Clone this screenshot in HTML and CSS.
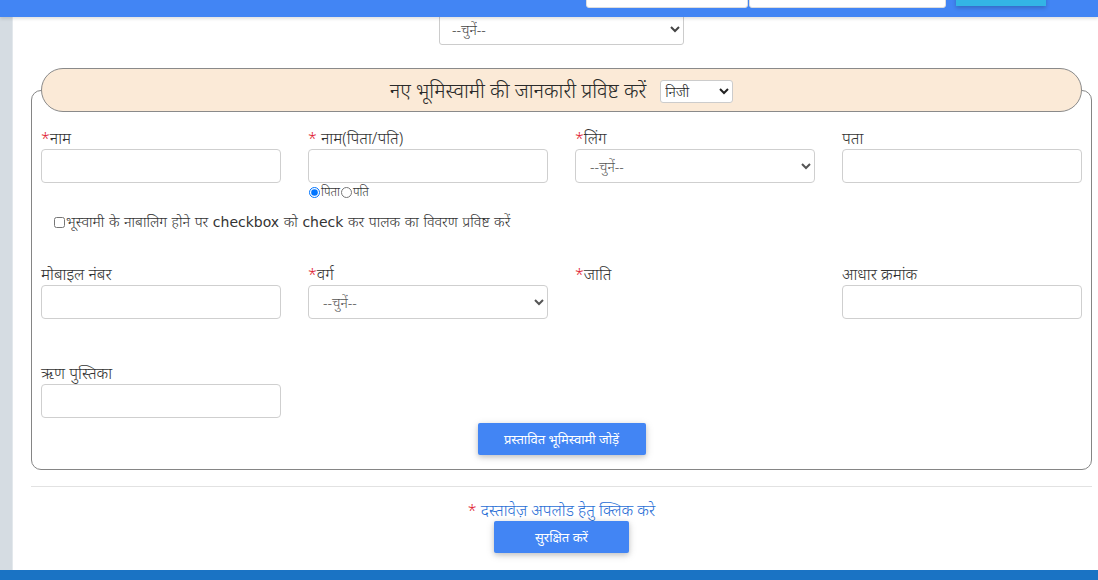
FILE: index.html
```html
<!DOCTYPE html>
<html lang="hi">
<head>
<meta charset="utf-8">
<title>नए भूमिस्वामी</title>
<link rel="stylesheet" href="styles.css">
</head>
<body>
<header class="topbar">
  <div class="search">
    <input class="search-input search-a" type="text">
    <input class="search-input search-b" type="text">
    <button class="search-btn" type="button">खोजें</button>
  </div>
</header>
<div class="page">
  <aside class="side"></aside>
  <main class="content">
    <div class="top-select-row">
      <select class="top-select"><option>--चुनें--</option></select>
    </div>
    <fieldset class="owner-box">
      <legend class="owner-legend">
        <span class="legend-title">नए भूमिस्वामी की जानकारी प्रविष्ट करें</span>
        <select class="legend-select"><option>निजी</option><option>शासकीय</option></select>
      </legend>

      <div class="grid row-1">
        <div class="field">
          <label class="lbl"><span class="req">*</span>नाम</label>
          <input class="ctrl" type="text">
        </div>
        <div class="field">
          <label class="lbl"><span class="req">*</span> नाम(पिता/पति)</label>
          <input class="ctrl" type="text">
          <div class="radios">
            <label class="radio"><input type="radio" name="rel" checked>पिता</label><label class="radio"><input type="radio" name="rel">पति</label>
          </div>
        </div>
        <div class="field">
          <label class="lbl"><span class="req">*</span>लिंग</label>
          <select class="ctrl sel"><option>--चुनें--</option></select>
        </div>
        <div class="field">
          <label class="lbl">पता</label>
          <input class="ctrl" type="text">
        </div>
      </div>

      <label class="minor"><input type="checkbox"><span>भूस्वामी के नाबालिग होने पर <span class="latin">checkbox</span> को <span class="latin">check</span> कर पालक का विवरण प्रविष्ट करें</span></label>

      <div class="grid row-2">
        <div class="field">
          <label class="lbl">मोबाइल नंबर</label>
          <input class="ctrl" type="text">
        </div>
        <div class="field">
          <label class="lbl"><span class="req">*</span>वर्ग</label>
          <select class="ctrl sel"><option>--चुनें--</option></select>
        </div>
        <div class="field">
          <label class="lbl"><span class="req">*</span>जाति</label>
        </div>
        <div class="field">
          <label class="lbl">आधार क्रमांक</label>
          <input class="ctrl" type="text">
        </div>
      </div>

      <div class="grid row-3">
        <div class="field">
          <label class="lbl">ऋण पुस्तिका</label>
          <input class="ctrl" type="text">
        </div>
      </div>

      <div class="center">
        <button class="btn btn-add" type="button">प्रस्तावित भूमिस्वामी जोड़ें</button>
      </div>
    </fieldset>

    <hr class="sep">

    <div class="center upload">
      <a class="upload-link" href="#"><span class="req">*</span> दस्तावेज़ अपलोड हेतु क्लिक करे</a>
    </div>
    <div class="center">
      <button class="btn btn-save" type="button">सुरक्षित करें</button>
    </div>
  </main>
</div>
<footer class="footer"></footer>
</body>
</html>
```
FILE: styles.css
```css
* { box-sizing: border-box; }
html, body { margin: 0; padding: 0; }
body {
  font-family: "Noto Sans", Roboto, "DejaVu Sans", sans-serif;
  font-weight: 300;
  color: #333;
  background: #fff;
  width: 1098px;
  height: 580px;
  overflow: hidden;
  display: flex;
  flex-direction: column;
}

.topbar {
  height: 17px;
  flex: none;
  background: #4285f4;
  position: relative;
  z-index: 2;
  overflow: hidden;
  box-shadow: 0 2px 3px rgba(0,0,0,0.12);
}
.search {
  display: flex;
  justify-content: flex-end;
  align-items: flex-start;
  padding-right: 52px;
  margin-top: -24px;
}
.search-input {
  height: 32px;
  border: 1px solid #ddd;
  border-radius: 3px;
  background: #fff;
  margin: 0;
}
.search-a { width: 162px; }
.search-b { width: 197px; margin-left: 1px; }
.search-btn {
  width: 90px;
  height: 30px;
  margin-left: 10px;
  border: 0;
  background: #33b5e5;
  color: #fff;
  font-size: 13px;
  line-height: 30px;
  padding: 0;
  box-shadow: 0 2px 4px rgba(0,0,0,0.2);
}

.page {
  flex: 1;
  display: flex;
  min-height: 0;
}
.side {
  width: 13px;
  flex: none;
  background: #d5dce2;
  border-right: 1px solid #e3e8ec;
}
.content {
  flex: 1;
  padding: 0 7px 0 18px;
}

.top-select-row {
  display: flex;
  justify-content: center;
  margin-top: -4px;
}
.top-select {
  width: 245px;
  height: 32px;
  font-family: "Noto Sans", sans-serif;
  font-weight: 300;
  font-size: 14px;
  color: #444;
  padding-left: 8px;
  border: 1px solid #ccc;
  border-radius: 3px;
  background: #fff;
}

.owner-box {
  margin: 23px 0 0;
  padding: 0 9px 14px;
  border: 1px solid #858585;
  border-radius: 10px;
  min-width: 0;
}
.owner-legend {
  width: 100%;
  height: 44px;
  padding: 0;
  background: #fbead7;
  border: 1px solid #8a8a8a;
  border-radius: 22px;
  display: flex;
  justify-content: center;
  align-items: center;
  gap: 14px;
}
.legend-title {
  font-size: 20px;
  color: #2a2a2a;
}
.legend-select {
  width: 73px;
  height: 23px;
  font-size: 14px;
  font-family: "Noto Sans", sans-serif;
  font-weight: 300;
  border: 1px solid #ccc;
  border-radius: 3px;
  background: #fff;
  color: #222;
  margin-top: 3px;
}

.grid {
  display: grid;
  grid-template-columns: repeat(4, 240px);
  column-gap: 27px;
}
.row-1 { margin-top: 16px; }
.row-2 { margin-top: 32px; }
.row-3 { margin-top: 44px; }

.field { display: flex; flex-direction: column; }
.lbl {
  font-size: 16px;
  line-height: 20px;
  color: #333;
  margin-bottom: 1px;
}
.req { color: #e0192f; }
.ctrl {
  width: 240px;
  height: 34px;
  border: 1px solid #cfcfcf;
  border-radius: 4px;
  background: #fff;
  margin: 0;
}
.sel {
  font-family: "Noto Sans", sans-serif;
  font-weight: 300;
  font-size: 14px;
  color: #555;
  padding-left: 10px;
}
.radios {
  font-size: 12px;
  line-height: 16px;
  color: #333;
  display: flex;
  margin-top: 1px;
}
.radio { display: inline-flex; align-items: center; }
.radio input { margin: 0 1px 0 1px; width: 11px; height: 11px; }

.minor {
  display: flex;
  align-items: center;
  margin: 12px 0 0 13px;
  font-family: "DejaVu Sans", "Noto Sans", sans-serif;
  font-weight: 300;
  font-size: 14.5px;
  line-height: 20px;
  color: #333;
}
.minor .latin {
  font-weight: 400;
  font-size: 14px;
  color: #333;
}
.minor input { margin: 0 1px 0 0; width: 11px; height: 11px; }

.center { display: flex; justify-content: center; }
.btn {
  border: 0;
  border-radius: 2px;
  background: #4285f4;
  color: #fff;
  font-family: "Noto Sans", sans-serif;
  font-weight: 400;
  font-size: 13px;
  box-shadow: 0 2px 5px rgba(0,0,0,0.16), 0 2px 10px rgba(0,0,0,0.12);
}
.btn-add { width: 168px; height: 32px; margin-top: 5px; }
.btn-save { width: 135px; height: 32px; }

.sep {
  margin: 16px 0 0;
  border: 0;
  border-top: 1px solid #e2e2e2;
}
.upload { margin-top: 13px; margin-bottom: 1px; }
.upload-link {
  font-size: 16px;
  line-height: 20px;
  color: #2a6fd6;
  text-decoration: none;
}

.footer {
  height: 10px;
  flex: none;
  background: #1a73c4;
}
```
